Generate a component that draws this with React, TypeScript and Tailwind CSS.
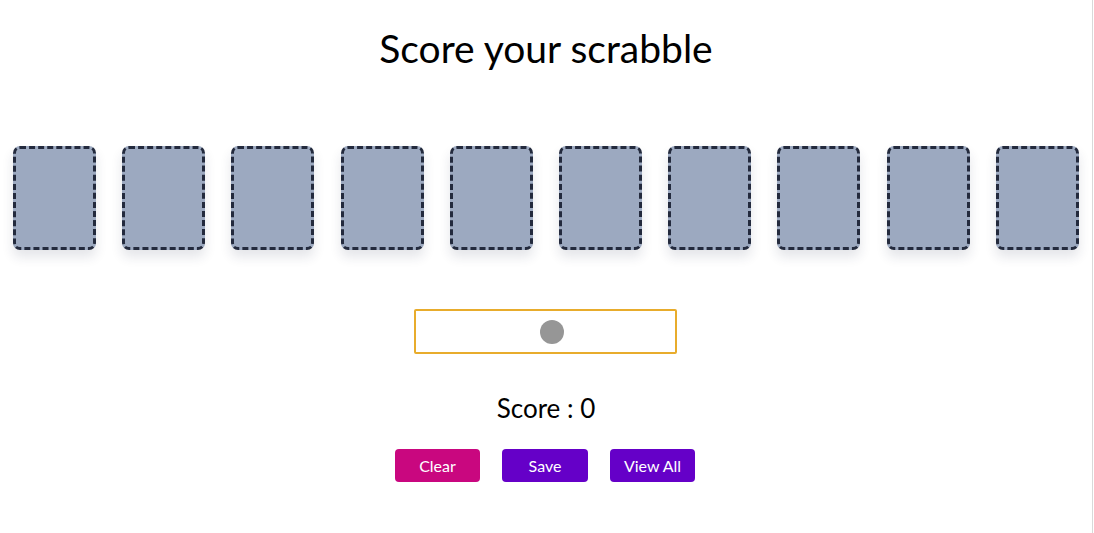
export default function App() {
  const tiles = Array.from({ length: 10 }, (_, i) => i);

  return (
    <div className="w-[1093px] min-h-[533px] border-r border-[#d9d9d9] bg-white font-['Lato',sans-serif] text-black">
      {/* Title */}
      <h1 className="pt-[25px] text-center text-[39px] leading-[46px] font-normal">Score your scrabble</h1>

      {/* Tile rack */}
      <div className="mt-[75px] flex justify-around">
        {tiles.map((t) => (
          <div
            key={t}
            className="h-[104px] w-[83px] rounded-[7px] border-[3px] border-dashed border-[#232a3d] bg-[#9ca9c0] shadow-[0_7px_12px_rgba(30,40,70,0.12)]"
          />
        ))}
      </div>

      {/* Input */}
      <div className="mt-[59px] flex justify-center">
        <div className="ml-[-2px] flex h-[45px] w-[263px] items-center justify-center rounded-[2px] border-2 border-[#e8ac2c]">
          <div className="ml-[14px] h-[24px] w-[24px] rounded-full bg-[#969696]" />
        </div>
      </div>

      {/* Score */}
      <p className="mt-[38px] text-center text-[26px] leading-[32px]">Score : 0</p>

      {/* Actions */}
      <div className="mt-[25px] flex justify-center gap-[22px] pr-[2px]">
        <button className="h-[33px] w-[85px] rounded-[4px] bg-[#c9077f] text-[16px] text-white">Clear</button>
        <button className="h-[33px] w-[86px] rounded-[4px] bg-[#6500c8] text-[16px] text-white">Save</button>
        <button className="h-[33px] w-[85px] rounded-[4px] bg-[#6500c8] text-[16px] text-white">View All</button>
      </div>
    </div>
  );
}
